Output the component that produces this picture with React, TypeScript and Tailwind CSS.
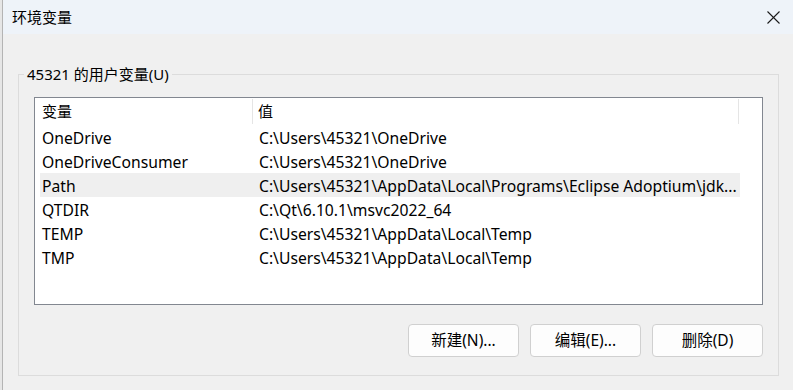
// App.tsx — Windows "环境变量" dialog, user variables group

const font = "font-['Segoe_UI','Noto_Sans','Noto_Sans_CJK_SC',sans-serif]";

const rows = [
  { name: "OneDrive", value: "C:\\Users\\45321\\OneDrive" },
  { name: "OneDriveConsumer", value: "C:\\Users\\45321\\OneDrive" },
  { name: "Path", value: "C:\\Users\\45321\\AppData\\Local\\Programs\\Eclipse Adoptium\\jdk...", selected: true },
  { name: "QTDIR", value: "C:\\Qt\\6.10.1\\msvc2022_64" },
  { name: "TEMP", value: "C:\\Users\\45321\\AppData\\Local\\Temp" },
  { name: "TMP", value: "C:\\Users\\45321\\AppData\\Local\\Temp" },
];

const buttons = ["新建(N)...", "编辑(E)...", "删除(D)"];

export default function App() {
  return (
    <div className={`w-[793px] h-[390px] flex bg-[#e9e9e9] overflow-hidden text-black ${font}`}>
      {/* sliver of the window behind */}
      <div className="w-[2px] shrink-0 bg-[#e6e6e6]" />

      <div className="flex-1 flex flex-col border-l border-[#b4b4b4] bg-[#f0f0f0]">
        {/* Title bar */}
        <div className="h-[34px] shrink-0 flex items-center justify-between bg-[#eef3f9] pl-[9px] pr-[13px]">
          <span className="text-[15px] leading-none">环境变量</span>
          <svg width="13" height="13" viewBox="0 0 13 13" fill="none" stroke="#1a1a1a" strokeWidth="1.1">
            <line x1="0.5" y1="0.5" x2="12.5" y2="12.5" />
            <line x1="12.5" y1="0.5" x2="0.5" y2="12.5" />
          </svg>
        </div>

        {/* Body */}
        <div className="flex-1 pl-[15px] pr-[14px] pt-[29px] pb-[14px] flex flex-col">
          <fieldset className="flex-1 border border-[#dcdcdc] pl-[15px] pr-[15px] pb-[18px] flex flex-col">
            <legend className="-ml-[10px] px-[3px] text-[15px] leading-[22px]">45321 的用户变量(U)</legend>

            {/* List view */}
            <div className="mt-[12px] h-[208px] border border-[#828790] bg-white flex flex-col">
              {/* Header */}
              <div className="h-[27px] shrink-0 flex text-[15px]">
                <div className="w-[218px] shrink-0 flex items-center pl-[7px] border-r border-[#e5e5e5] my-[1px]">变量</div>
                <div className="w-[486px] shrink-0 flex items-center pl-[5px] border-r border-[#e5e5e5] my-[1px]">值</div>
              </div>
              {/* Rows */}
              <div className="flex flex-col pl-[5px] text-[15.7px]">
                {rows.map((r) => (
                  <div
                    key={r.name}
                    className={`h-[24px] w-[700px] flex items-center ${r.selected ? "bg-[#efefef]" : ""}`}
                  >
                    <div className="w-[213px] shrink-0 pl-[2px] pt-[3px] whitespace-nowrap">{r.name}</div>
                    <div className="w-[485px] shrink-0 pl-[6px] pt-[3px] whitespace-nowrap">{r.value}</div>
                  </div>
                ))}
              </div>
            </div>

            {/* Buttons */}
            <div className="mt-auto flex justify-end gap-[11px]">
              {buttons.map((b) => (
                <button
                  key={b}
                  className="w-[111px] h-[33px] rounded-[4px] border border-[#d0d0d0] bg-[#fdfdfd] text-[15.5px] flex items-center justify-center"
                >
                  {b}
                </button>
              ))}
            </div>
          </fieldset>
        </div>
      </div>
    </div>
  );
}
